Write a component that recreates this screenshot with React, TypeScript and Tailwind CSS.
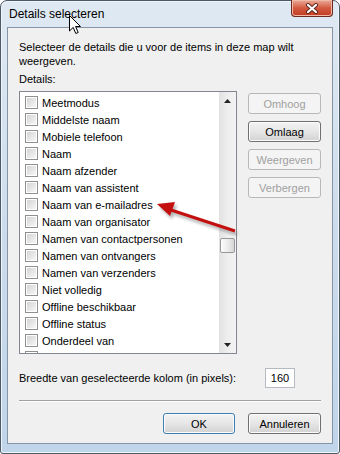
import React from 'react'

const velden = [
  'Meetmodus',
  'Middelste naam',
  'Mobiele telefoon',
  'Naam',
  'Naam afzender',
  'Naam van assistent',
  'Naam van e-mailadres',
  'Naam van organisator',
  'Namen van contactpersonen',
  'Namen van ontvangers',
  'Namen van verzenders',
  'Niet volledig',
  'Offline beschikbaar',
  'Offline status',
  'Onderdeel van',
]

function Vinkje() {
  return (
    <div className="w-[13px] h-[13px] shrink-0 border border-[#8e8f8f] bg-white p-px">
      <div className="w-full h-full bg-gradient-to-br from-[#d4d4d4] to-[#f7f7f7]" />
    </div>
  )
}

function Knop({ label, disabled, standaard }: { label: string; disabled?: boolean; standaard?: boolean }) {
  if (disabled) {
    return (
      <div className="h-[21px] w-[73px] rounded-[3px] border border-[#b8b8b8] bg-[#f4f4f4] flex items-center justify-center text-[#a0a0a0]">
        {label}
      </div>
    )
  }
  return (
    <div
      className={`h-[21px] rounded-[3px] border flex items-center justify-center text-black bg-gradient-to-b from-[#f3f3f3] via-[#e6e6e6] to-[#d2d2d2] shadow-[inset_0_0_0_1px_#fcfcfc] ${
        standaard ? 'w-[72px] border-[#3c7fb1] shadow-[inset_0_0_0_1px_#bfe6f7]' : 'w-[73px] border-[#707070]'
      }`}
    >
      {label}
    </div>
  )
}

export default function App() {
  return (
    <div className="relative w-[340px] h-[454px] bg-white overflow-hidden font-['Liberation_Sans',Arial,sans-serif] text-[11px] leading-[14px] text-black">
      <div className="h-full flex flex-col px-[6px] pb-[9px] rounded-t-[7px] rounded-b-[3px] border border-[#4d5966] bg-gradient-to-b from-[#dfe9f3] via-[#cddcec] to-[#c0d5ea] shadow-[inset_0_0_0_1px_#eef5fb]">
        {/* titelbalk */}
        <div className="h-[26px] flex items-start">
          <div className="pl-[2px] pt-[6px] text-[12px] leading-[14px] text-black">Details selecteren</div>
          <div className="ml-auto -mt-px w-[42px] h-[17px] rounded-b-[4px] border border-t-0 border-[#6b2a1e] bg-gradient-to-b from-[#e9aa98] via-[#d25a40] to-[#c23b20] shadow-[inset_0_0_0_1px_#f0b9a8] flex items-center justify-center">
            <svg width="14" height="11" viewBox="0 0 14 11">
              <path d="M3 2 L11 9 M11 2 L3 9" stroke="#5a2418" strokeWidth="4" strokeLinecap="round" />
              <path d="M3 2 L11 9 M11 2 L3 9" stroke="#ffffff" strokeWidth="2.2" strokeLinecap="round" />
            </svg>
          </div>
        </div>

        {/* client */}
        <div className="flex-1 border border-[#8595a6] bg-[#f0f0f0] px-[11px]">
          <p className="pt-[12px] pr-[12px]">Selecteer de details die u voor de items in deze map wilt weergeven.</p>
          <div className="mt-[4px]">Details:</div>

          <div className="mt-[5px] flex gap-[11px]">
            <div className="w-[218px] h-[263px] border border-[#828790] bg-white flex">
              <div className="flex-1 overflow-hidden pt-[2px]">
                {velden.map((v) => (
                  <div key={v} className="h-[17px] flex items-center pl-[5px] gap-[4px] whitespace-nowrap">
                    <Vinkje />
                    <span>{v}</span>
                  </div>
                ))}
                <div className="h-[17px] flex items-center pl-[5px]">
                  <Vinkje />
                </div>
              </div>
              <div className="w-[17px] flex flex-col bg-gradient-to-r from-[#e2e2e2] via-[#eeeeee] to-[#f3f3f3]">
                <div className="h-[17px] flex items-center justify-center">
                  <svg width="7" height="4" viewBox="0 0 7 4">
                    <path d="M0 4 L3.5 0 L7 4 Z" fill="#222" />
                  </svg>
                </div>
                <div className="flex-1">
                  <div className="mt-[129px] mx-px w-[15px] h-[15px] rounded-[2px] border border-[#979797] bg-gradient-to-r from-[#fdfdfd] via-[#ececec] to-[#d6d6d6]" />
                </div>
                <div className="h-[17px] flex items-center justify-center">
                  <svg width="7" height="4" viewBox="0 0 7 4">
                    <path d="M0 0 L7 0 L3.5 4 Z" fill="#222" />
                  </svg>
                </div>
              </div>
            </div>

            <div className="pt-[2px] flex flex-col gap-[7px]">
              <Knop label="Omhoog" disabled />
              <Knop label="Omlaag" />
              <Knop label="Weergeven" disabled />
              <Knop label="Verbergen" disabled />
            </div>
          </div>

          <div className="mt-[14px] h-[20px] flex items-center">
            <div className="w-[246px]">Breedte van geselecteerde kolom (in pixels):</div>
            <div className="w-[30px] h-[20px] border border-[#b5b9c0] bg-white flex items-center justify-center">160</div>
          </div>

          <div className="mt-[12px] border-t border-[#a0a0a0] border-b border-b-white" />

          <div className="mt-[11px] flex justify-end gap-[13px]">
            <Knop label="OK" standaard />
            <Knop label="Annuleren" />
          </div>
        </div>
      </div>

      {/* rode pijl */}
      <svg className="absolute left-0 top-0 pointer-events-none" width="340" height="454">
        <defs>
          <filter id="schaduw" x="-20%" y="-20%" width="140%" height="140%">
            <feGaussianBlur stdDeviation="1.5" />
          </filter>
        </defs>
        <g filter="url(#schaduw)" opacity="0.45" transform="translate(2 3)">
          <line x1="235" y1="231" x2="171" y2="210" stroke="#555" strokeWidth="3" />
          <polygon points="157,204 175,202 170,216" fill="#555" />
        </g>
        <line x1="235" y1="231" x2="171" y2="210" stroke="#c40f0f" strokeWidth="3" />
        <polygon points="157,204 175,202 170,216" fill="#c40f0f" />
      </svg>

      {/* muisaanwijzer */}
      <svg className="absolute left-[69px] top-[15px] pointer-events-none" width="13" height="20" viewBox="0 0 13 20">
        <path d="M0.5 0.5 L0.5 16 L4.2 12.4 L6.8 18.5 L9.2 17.5 L6.6 11.5 L11.5 11.5 Z" fill="#fff" stroke="#000" strokeWidth="1" strokeLinejoin="round" />
      </svg>
    </div>
  )
}
